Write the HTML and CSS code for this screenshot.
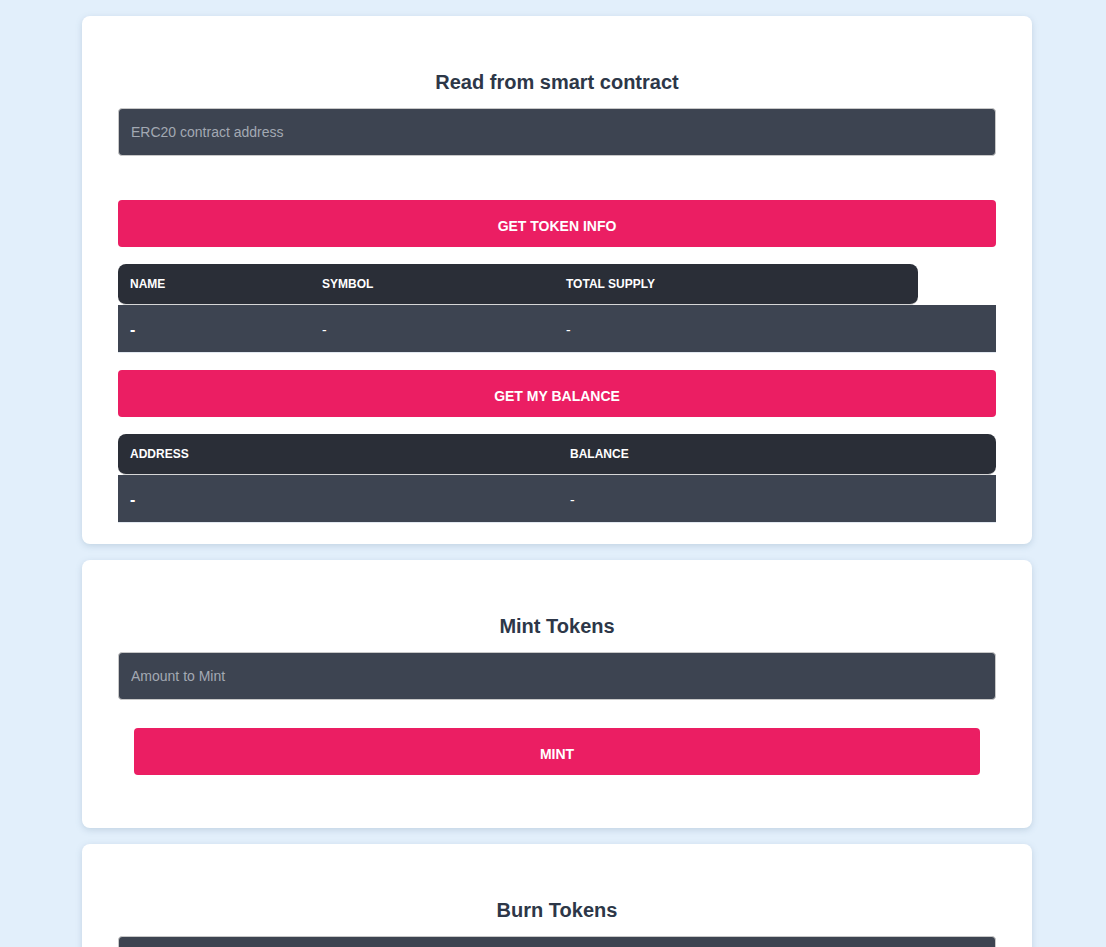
FILE: index.html
```html
<!DOCTYPE html>
<html>
<head>
<meta charset="utf-8">
<link rel="stylesheet" href="styles.css">
</head>
<body>
<main class="page">
  <section class="card card-read">
    <h2 class="title">Read from smart contract</h2>
    <input class="field" type="text" placeholder="ERC20 contract address">
    <button class="btn btn-first">GET TOKEN INFO</button>
    <div class="tbl tbl-info">
      <div class="thead thead-short">
        <div class="c c1">NAME</div>
        <div class="c c2">SYMBOL</div>
        <div class="c c3">TOTAL SUPPLY</div>
      </div>
      <div class="trow">
        <div class="c c1 strong">-</div>
        <div class="c c2">-</div>
        <div class="c c3">-</div>
      </div>
    </div>
    <button class="btn">GET MY BALANCE</button>
    <div class="tbl tbl-bal">
      <div class="thead">
        <div class="c b1">ADDRESS</div>
        <div class="c b2">BALANCE</div>
      </div>
      <div class="trow">
        <div class="c b1 strong">-</div>
        <div class="c b2">-</div>
      </div>
    </div>
  </section>

  <section class="card card-mint">
    <h2 class="title">Mint Tokens</h2>
    <input class="field" type="text" placeholder="Amount to Mint">
    <button class="btn btn-inset">MINT</button>
  </section>

  <section class="card card-burn">
    <h2 class="title">Burn Tokens</h2>
    <input class="field" type="text" placeholder="Amount to Burn">
    <button class="btn btn-inset">BURN</button>
  </section>
</main>
</body>
</html>
```

FILE: styles.css
```css
* { box-sizing: border-box; }
html, body { margin: 0; padding: 0; }
body {
  background: #e2effb;
  font-family: "Liberation Sans", Arial, sans-serif;
}
.page {
  padding: 16px 74px 16px 82px;
  display: flex;
  flex-direction: column;
  gap: 16px;
}
.card {
  background: #ffffff;
  border-radius: 8px;
  box-shadow: 0 2px 6px rgba(100, 130, 160, 0.25);
  padding: 52px 36px 21px;
  display: flex;
  flex-direction: column;
}
.card-mint { padding-bottom: 53px; }
.title {
  margin: 0 0 12px;
  text-align: center;
  font-size: 20px;
  line-height: 28px;
  font-weight: 700;
  color: #2d3748;
}
.field {
  display: block;
  width: 100%;
  height: 48px;
  background: #3d4451;
  border: 1px solid #c8c8c8;
  border-radius: 4px;
  padding: 0 12px;
  font-family: "Liberation Sans", Arial, sans-serif;
  font-size: 14px;
  color: #ffffff;
  outline: none;
}
.field::placeholder { color: #a3a9b3; }
.btn {
  display: block;
  width: 100%;
  height: 47px;
  border: none;
  border-radius: 4px;
  background: #eb1e63;
  color: #ffffff;
  font-family: "Liberation Sans", Arial, sans-serif;
  font-size: 14px;
  font-weight: 700;
  padding: 5px 0 0;
  margin-top: 17px;
  cursor: pointer;
}
.btn-first { margin-top: 44px; }
.btn-inset {
  margin: 28px 16px 0;
  width: auto;
}
.tbl { margin-top: 17px; }
.thead {
  display: flex;
  height: 41px;
  align-items: center;
  background: #2a2e37;
  border-radius: 8px;
  border-bottom: 1px solid #d6d6d6;
  color: #ffffff;
  font-size: 12px;
  font-weight: 700;
  text-transform: uppercase;
}
.thead-short { width: 800px; }
.trow {
  display: flex;
  height: 48px;
  align-items: center;
  padding-top: 2px;
  background: #3d4451;
  border-bottom: 1px solid #e2e8f0;
  color: #ffffff;
  font-size: 14px;
}
.c { padding-left: 12px; }
.c1 { width: 192px; }
.c2 { width: 244px; }
.c3 { flex: 1; }
.b1 { width: 440px; }
.b2 { flex: 1; }
.strong { font-weight: 700; font-size: 16px; }
```
